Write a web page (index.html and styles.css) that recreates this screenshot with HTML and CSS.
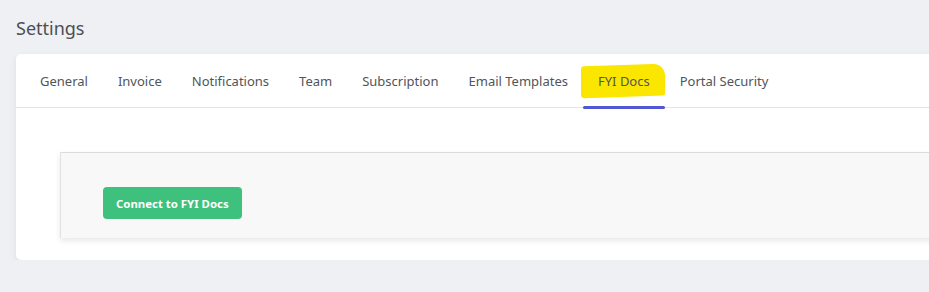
FILE: index.html
```html
<!DOCTYPE html>
<html lang="en">
<head>
    <meta charset="UTF-8">
    <meta name="viewport" content="width=device-width, initial-scale=1.0">
    <title>Settings</title>
    <link rel="stylesheet" href="styles.css">
</head>
<body>
    <h1 class="page-title">Settings</h1>

    <div class="card">
        <nav class="tabs">
            <a class="tab" href="#">General</a>
            <a class="tab" href="#">Invoice</a>
            <a class="tab" href="#">Notifications</a>
            <a class="tab" href="#">Team</a>
            <a class="tab" href="#">Subscription</a>
            <a class="tab" href="#">Email Templates</a>
            <a class="tab active" href="#"><span class="marker"></span><span class="tab-label">FYI Docs</span></a>
            <a class="tab" href="#">Portal Security</a>
        </nav>

        <div class="card-body">
            <div class="panel">
                <button class="btn-connect">Connect to FYI Docs</button>
            </div>
        </div>
    </div>
</body>
</html>
```

FILE: styles.css
```css
body { margin: 0; padding: 0 0 0 16px; background: #eef0f3; font-family: "Noto Sans", "Open Sans", sans-serif; overflow: hidden; }
.page-title { margin: 0; padding-top: 16px; height: 54px; font-size: 18px; font-weight: 400; color: #4a4f55; line-height: 24px; box-sizing: border-box; }
.card { background: #fff; border-radius: 5px 0 0 5px; box-shadow: 0 3px 7px rgba(0, 0, 0, 0.08); margin-right: -20px; }
.tabs { display: flex; height: 54px; padding-left: 9px; border-bottom: 1px solid #e2e5e8; box-sizing: border-box; }
.tab { position: relative; display: flex; align-items: center; padding: 0 15px; font-size: 13px; color: #4f555b; text-decoration: none; }
.tab-label { position: relative; }
.tab.active::after { content: ""; position: absolute; left: 0; right: 0; bottom: -2px; height: 3px; border-radius: 2px; background: #5057d0; }
.marker { position: absolute; left: -2px; right: 0; top: 11px; bottom: 10px; background: #fbe600; border-radius: 3px 12px 2px 4px; transform: skewY(-2deg); }
.card-body { padding: 44px 0 22px 44px; }
.panel { background: #f8f8f8; border-top: 1px solid #dcdcdc; border-left: 1px solid #e2e2e2; padding: 34px 42px 19px; box-shadow: 0 3px 6px rgba(0, 0, 0, 0.09); }
.btn-connect { height: 32px; padding: 0 13px; border: none; border-radius: 4px; background: #3dc17c; color: #fff; font-family: "Noto Sans", sans-serif; font-size: 11.4px; font-weight: 700; cursor: pointer; }
```
